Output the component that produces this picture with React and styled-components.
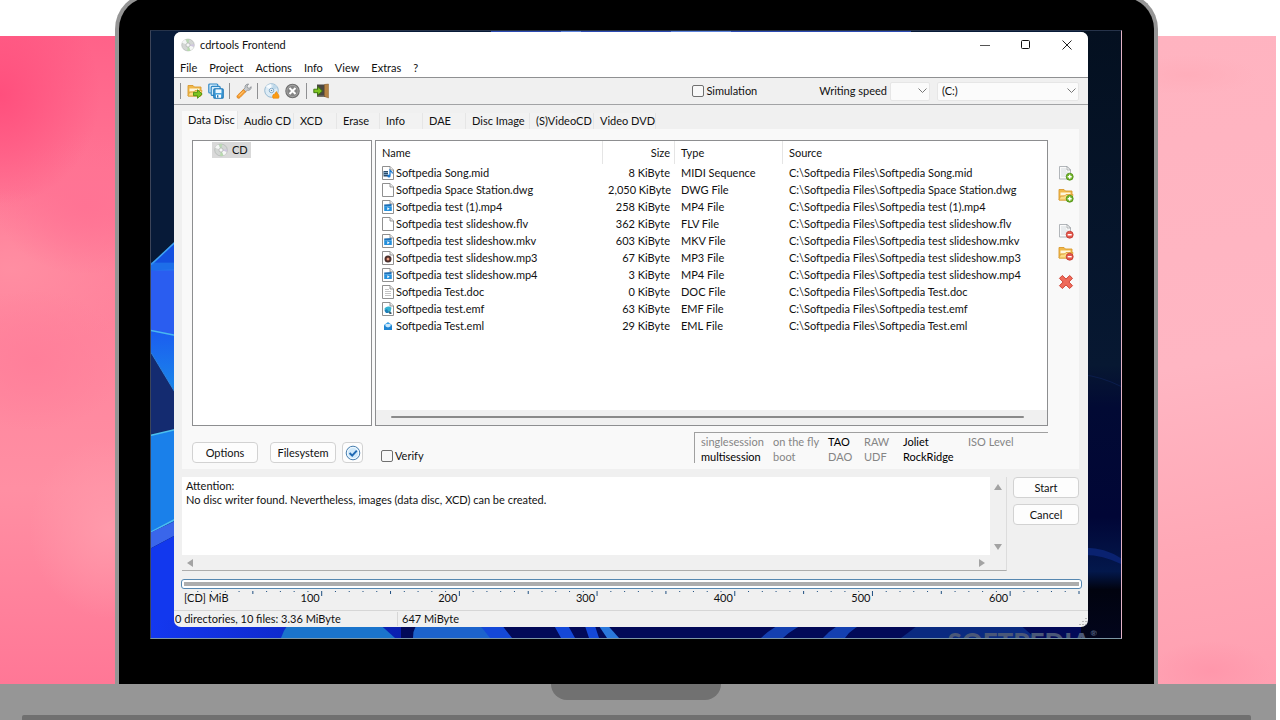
import { useState } from "react";
import styled, { createGlobalStyle, css } from "styled-components";

const MENU = ['File', 'Project', 'Actions', 'Info', 'View', 'Extras', '?'];

const TABS = [
  { label: 'Data Disc', width: 56 },
  { label: 'Audio CD', width: 56 },
  { label: 'XCD', width: 43 },
  { label: 'Erase', width: 43 },
  { label: 'Info', width: 43 },
  { label: 'DAE', width: 43 },
  { label: 'Disc Image', width: 64 },
  { label: '(S)VideoCD', width: 64 },
  { label: 'Video DVD', width: 62 },
];

const FILES = [
  { name: 'Softpedia Song.mid', size: '8 KiByte', type: 'MIDI Sequence', icon: 'midi' },
  { name: 'Softpedia Space Station.dwg', size: '2,050 KiByte', type: 'DWG File', icon: 'blank' },
  { name: 'Softpedia test (1).mp4', size: '258 KiByte', type: 'MP4 File', icon: 'video' },
  { name: 'Softpedia test slideshow.flv', size: '362 KiByte', type: 'FLV File', icon: 'blank' },
  { name: 'Softpedia test slideshow.mkv', size: '603 KiByte', type: 'MKV File', icon: 'video' },
  { name: 'Softpedia test slideshow.mp3', size: '67 KiByte', type: 'MP3 File', icon: 'audio' },
  { name: 'Softpedia test slideshow.mp4', size: '3 KiByte', type: 'MP4 File', icon: 'video' },
  { name: 'Softpedia Test.doc', size: '0 KiByte', type: 'DOC File', icon: 'doc' },
  { name: 'Softpedia test.emf', size: '63 KiByte', type: 'EMF File', icon: 'image' },
  { name: 'Softpedia Test.eml', size: '29 KiByte', type: 'EML File', icon: 'mail' },
];

const FLAGS = [
  [['singlesession', false], ['multisession', true]],
  [['on the fly', false], ['boot', false]],
  [['TAO', true], ['DAO', false]],
  [['RAW', false], ['UDF', false]],
  [['Joliet', true], ['RockRidge', true]],
  [['ISO Level', false]],
];

const LOG = 'Attention:\nNo disc writer found. Nevertheless, images (data disc, XCD) can be created.';
const CAPACITY = 650;

function DiscIcon() {
  return (
    <svg width="14" height="14" viewBox="0 0 16 16">
      <ellipse cx="8" cy="8" rx="7.2" ry="6.8" fill="#d3d6d4" stroke="#a6aaa8" strokeWidth=".6" />
      <path d="M8 8 1.2 5.5A7 7 0 0 1 5 1.8Z" fill="#f4f6f5" />
      <path d="M8 8 14.6 10A7 7 0 0 1 11 14.2Z" fill="#f7f8f7" />
      <path d="M8 8 5.5 1.6A7 7 0 0 1 9.5 1.2Z" fill="#b9d8b4" />
      <path d="M8 8 10.8 14.3A7 7 0 0 1 7 14.8Z" fill="#b7d9ae" />
      <path d="M8 8 15 7A7 7 0 0 1 14.6 10Z" fill="#cfc6df" />
      <circle cx="8" cy="8" r="2.4" fill="#eef0ef" stroke="#a9adab" strokeWidth=".7" />
      <circle cx="8" cy="8" r=".9" fill="#fff" />
    </svg>
  )
}

function FolderShape() {
  return (
    <>
      <path d="M1 13V2.5h5L7.5 4H14v9Z" fill="#f0b84a" stroke="#d9982e" strokeWidth=".9" />
      <path d="M2.5 5.5h10v3h-10Z" fill="#fff6dc" />
      <path d="M1 13 2.6 9.2l4-.2L8 7.5h7L13.8 13Z" fill="#fbdc85" stroke="#dea33a" strokeWidth=".9" />
    </>
  )
}

function OpenIcon() {
  return (
    <svg width="16" height="16" viewBox="0 0 16 16">
      <FolderShape />
      <path d="M6.5 9.3h4V6.8L15.2 11l-4.7 4.3v-2.6h-4Z" fill="#7cc41f" stroke="#4b8f10" strokeWidth=".9" />
    </svg>
  )
}

function SaveAllIcon() {
  return (
    <svg width="16" height="16" viewBox="0 0 16 16">
      <rect x=".8" y="1" width="9" height="9" rx="1" fill="#d5ecfa" stroke="#2f88c6" strokeWidth="1.2" />
      <rect x="3.2" y="3.4" width="9" height="9" rx="1" fill="#d5ecfa" stroke="#2f88c6" strokeWidth="1.2" />
      <rect x="5.8" y="5.8" width="9.4" height="9.4" rx="1" fill="#4aa3dc" stroke="#1f77b6" strokeWidth="1.2" />
      <rect x="7.6" y="6.4" width="5.8" height="3.6" fill="#eef8ff" />
      <rect x="8" y="11.6" width="5" height="3.2" fill="#fff" />
      <rect x="9" y="12.2" width="1.4" height="2.4" fill="#1f77b6" />
    </svg>
  )
}

function WrenchIcon() {
  return (
    <svg width="16" height="16" viewBox="0 0 16 16">
      <path d="M9 9.2 7 7.2l2-2.4c-.3-2 1-3.8 3.6-3.8l-1.6 2 .4 1.8 1.8.5 2-1.6c.2 2.4-1.6 4-3.8 3.6Z" fill="#c9cccf" stroke="#858a8f" strokeWidth=".8" />
      <path d="M7.4 6.6 9.6 8.8 4 14.6c-.8.8-2 .8-2.6.1s-.6-1.7.2-2.5Z" fill="#f7a034" stroke="#d97c17" strokeWidth=".8" />
      <path d="M3 12.8 7.4 8.3" stroke="#ffd08a" strokeWidth=".9" />
    </svg>
  )
}

function BurnIcon() {
  return (
    <svg width="16" height="16" viewBox="0 0 16 16">
      <circle cx="7.5" cy="7.5" r="6.8" fill="#dcebf5" stroke="#8fb4cf" strokeWidth=".9" />
      <path d="M7.5 7.5 2 3.5A6.5 6.5 0 0 1 7 1Z" fill="#f6fbff" />
      <path d="M7.5 7.5 9 1.2A6.5 6.5 0 0 1 13.5 5Z" fill="#bfd9ea" />
      <circle cx="7.5" cy="7.5" r="2.2" fill="#fff" stroke="#6f9dbf" strokeWidth=".9" />
      <circle cx="7.5" cy="7.5" r=".8" fill="#4f86ad" />
      <path d="M9 15.3c-.8-1.8-.4-3.2.8-4.2l.7.8c.2-1.6 1-2.6 2-3.4.2 1.4 2.6 2.8 2.6 4.9 0 .8-.2 1.4-.6 1.9Z" fill="#fb9b12" stroke="#e57d00" strokeWidth=".5" />
    </svg>
  )
}

function StopIcon() {
  return (
    <svg width="16" height="16" viewBox="0 0 16 16">
      <circle cx="7.5" cy="8" r="6.7" fill="#a4a4a4" stroke="#707070" strokeWidth="1.1" />
      <circle cx="7.5" cy="8" r="5.2" fill="#858585" />
      <path d="m5.2 5.7 4.6 4.6m0-4.6-4.6 4.6" stroke="#fff" strokeWidth="2" strokeLinecap="square" />
    </svg>
  )
}

function ExitIcon() {
  return (
    <svg width="16" height="16" viewBox="0 0 16 16">
      <path d="M4 1.5h11V14H4Z" fill="#4a4742" />
      <path d="M11.5 1.5 15.5 1v14l-4-1.5Z" fill="#b58344" stroke="#8d6330" strokeWidth=".5" />
      <path d="M4 12.5h7V14H4Z" fill="#77736c" />
      <path d="M.8 6.2h4V3.6L9.4 8l-4.6 4.3V9.7h-4Z" fill="#7cc41f" stroke="#39700d" strokeWidth=".9" />
    </svg>
  )
}

function BadgeIcon({ folder, remove }) {
  return (
    <svg width="16" height="16" viewBox="0 0 16 16">
      {folder ? <FolderShape /> : (
        <>
          <path d="M1.5 1.5H9L12.5 5v9h-11Z" fill="#fafafa" stroke="#a9aeb2" strokeWidth=".9" />
          <path d="M3 3h5v3.5h3V12H3Z" fill="#e8ebed" />
          <path d="M9 1.5V5h3.5Z" fill="#fff" stroke="#8d9296" strokeWidth=".7" />
        </>
      )}
      <circle cx="11.7" cy="11.7" r="3.5" fill={remove ? '#e4574c' : '#74b62b'} stroke={remove ? '#c03a30' : '#4c8d14'} strokeWidth=".8" />
      <path d={remove ? 'M9.7 11.7h4' : 'M9.7 11.7h4m-2-2v4'} stroke="#fff" strokeWidth="1.4" />
    </svg>
  )
}

function DeleteIcon() {
  return (
    <svg width="16" height="16" viewBox="0 0 16 16">
      <path d="M4.300 1.500 8 5.100l3.700-3.600 2.800 2.800L10.900 8l3.600 3.700-2.800 2.800L8 10.900l-3.700 3.600-2.800-2.800L5.100 8 1.500 4.300Z" fill="#ee6a5a" stroke="#cf4234" strokeWidth="1" strokeLinejoin="round" />
    </svg>
  )
}

function CheckIcon() {
  return (
    <svg width="16" height="16" viewBox="0 0 16 16">
      <circle cx="8" cy="8" r="6.8" fill="#cfe8fa" stroke="#4a7fae" strokeWidth="1" />
      <circle cx="8" cy="8" r="5.6" fill="none" stroke="#f4fbff" strokeWidth=".9" />
      <path d="m4.600 8 2.600 2.600 4.600-5" fill="none" stroke="#1f69b3" strokeWidth="2" />
    </svg>
  )
}

function FileIcon({ kind }) {
  if (kind === 'mail') {
    return (
      <svg width="12" height="14" viewBox="0 0 12 14">
        <path d="M2 6 6 3l4 3v5H2Z" fill="#3ba0e6" />
        <path d="M3.5 5h5v3.5h-5Z" fill="#c9e7fb" />
        <path d="m2 6.5 4 2.3 4-2.3V11H2Z" fill="#1e84d2" />
      </svg>
    )
  }
  return (
    <svg width="12" height="14" viewBox="0 0 12 14">
      <path d="M.5.5H8L11.500 4v9.500H.5Z" fill="#fff" stroke="#909090" />
      <path d="M8 .5V4h3.500" fill="#ececec" stroke="#808080" strokeWidth=".8" />
      {kind === 'midi' && (
        <>
          <path d="M1.500 5H6v5.500H1.500Z" fill="#2b4a68" />
          <path d="M1.500 6.500H6M1.500 8.500H6" stroke="#9cc4e4" strokeWidth=".7" />
          <path d="M8 9.500V4.500c.8 1 2.400 1 2.400 3" fill="none" stroke="#1677d2" strokeWidth="1.300" />
          <circle cx="7" cy="10" r="1.6" fill="#1677d2" />
        </>
      )}
      {kind === 'video' && (
        <>
          <path d="M2.200 4.500 9.600 4v2l-7.400.5Z" fill="#1f6fb5" />
          <path d="M2.200 6.300h7.600V11H2.200Z" fill="#2590dc" />
          <path d="m5.300 7.200 2.400 1.500-2.400 1.500Z" fill="#fff" />
        </>
      )}
      {kind === 'audio' && (
        <>
          <circle cx="6" cy="8" r="3.5" fill="#4b2f2c" />
          <circle cx="6" cy="8" r="1.5" fill="#e2805f" />
          <circle cx="6" cy="8" r=".6" fill="#fff" />
        </>
      )}
      {kind === 'doc' && <path d="M3 4.500h4M3 6.500h6M3 8.500h6M3 10.500h6" stroke="#b5b5b5" strokeWidth=".8" />}
      {kind === 'image' && (
        <>
          <path d="M2.300 7c1-2.500 5-3.500 7.200-1.200l-1 4.200H4.300Z" fill="#35b3d3" />
          <path d="M2.300 8.500 5 7l2 4H4Z" fill="#1f7fb8" />
          <path d="m6.500 9 3 1.500V12h-2Z" fill="#3d5a6b" />
        </>
      )}
    </svg>
  )
}

// abstract ribbons that show around the window
function Wallpaper() {
  return (
    <WallpaperArt viewBox="0 0 970 608" preserveAspectRatio="none" aria-hidden="true">
      <defs>
        <linearGradient id="wp-blue" x1="0" y1="0" x2="1" y2="0">
          <stop offset="0" stopColor="#1438f0" />
          <stop offset="1" stopColor="#0a1fb0" />
        </linearGradient>
        <linearGradient id="wp-cyan" x1="0" y1="0" x2="0" y2="1">
          <stop offset="0" stopColor="#1b5cf0" />
          <stop offset="1" stopColor="#1a8fe8" />
        </linearGradient>
        <linearGradient id="wp-right" x1="0" y1="0" x2="0" y2="1">
          <stop offset="0" stopColor="#041020" />
          <stop offset=".55" stopColor="#071832" />
          <stop offset=".62" stopColor="#020a34" />
          <stop offset=".8" stopColor="#010636" />
          <stop offset=".89" stopColor="#03184c" />
          <stop offset=".92" stopColor="#01030f" />
          <stop offset="1" stopColor="#02051c" />
        </linearGradient>
      </defs>
      <path d="M0 0h970v608H0Z" fill="#071a38" />
      <path d="M340 0h420v3H340Z" fill="#2c4bb4" />
      <path d="M410 0h20v3h-20ZM520 0h60v3h-60Z" fill="#5b82dc" />
      <path d="M930 0h40v608h-40Z" fill="url(#wp-right)" />
      <path d="M930 344q20 2 40 12" fill="none" stroke="#0b1d4c" />
      <path d="M930 518q20-2 40 10v6q-20-10-40-9Z" fill="#0a2270" />
      <path d="M0 234 30 206v100L0 300Z" fill="#2a5df0" />
      <path d="M0 234 30 206v32L0 240Z" fill="#1450e0" />
      <path d="M0 234 30 206" stroke="#3fa4f4" strokeWidth="1.5" />
      <path d="M0 232h30v8H0Z" fill="#2382ee" opacity=".6" />
      <path d="M0 300 30 306v66L0 322Z" fill="url(#wp-cyan)" />
      <path d="M0 300 30 306" stroke="#49b8f0" strokeWidth="1.5" />
      <path d="M0 322 30 372v26L0 405Z" fill="#142b70" />
      <path d="M0 322 30 372" stroke="#2f86e0" />
      <path d="M0 405 30 398v90L0 502Z" fill="#1a80ea" />
      <path d="M0 405 30 398M0 502 30 486" stroke="#4cc0ee" strokeWidth="1.5" />
      <path d="M0 502 30 488v14L0 518Z" fill="#3a66ea" />
      <path d="M0 518 30 502v106H0Z" fill="#1238ee" />
      <path d="M20 590h910v18H20Z" fill="#020a58" />
      <path d="M0 590h250v18H0Z" fill="url(#wp-blue)" />
      <path d="M130 608q5-15 14-18h80l20 18Z" fill="#1a74cc" />
      <path d="M262 608q0-14 10-18h50l22 18Z" fill="#1c63cc" />
      <path d="M325 590h22l14 18h-22ZM400 590h14l10 18h-14ZM432 590h10l6 18h-10Z" fill="#1448d8" />
      <path d="m452 590 16 18h-12l-12-18Z" fill="#2a78dc" />
      <path d="M610 608q12-12 30-18h22q-20 8-30 18ZM672 608q10-12 28-18h20q-20 8-26 18Z" fill="#1440b0" />
      <path d="m750 608 24-18h90l20 18Z" fill="#0a2a80" />
    </WallpaperArt>
  )
}

function Ruler() {
  const ticks = [];
  for (let v = 10; v <= CAPACITY; v += 10) ticks.push(v);
  return (
    <RulerBox>
      <Ticks aria-hidden="true">
        {ticks.map((v) => {
          const x = `${(v / CAPACITY) * 100}%`;
          const length = v % 100 === 0 ? 5 : v % 50 === 0 ? 3 : 1;
          return <line key={v} x1={x} x2={x} y1="0" y2={length} stroke="#1f4f80" strokeWidth="1" />
        })}
      </Ticks>
      <RulerLabels>
        {[100, 200, 300, 400, 500, 600].map((v) => (
          <RulerCell key={v}>
            <span>{v === 100 && '[CD] MiB'}</span>
            <span>{v}</span>
          </RulerCell>
        ))}
      </RulerLabels>
    </RulerBox>
  )
}

function App() {
  const [tab, setTab] = useState('Data Disc');

  return (
    <Page>
      <GlobalStyle />
      <Scene>
        <Backdrop />
        <Lid>
          <Screen>
            <Wallpaper />
            <Watermark>SOFTPEDIA<sup>®</sup></Watermark>
            <Window>
              <TitleBar>
                <DiscIcon />
                <Title>cdrtools Frontend</Title>
                <Caption aria-label="Minimize">
                  <svg width="10" height="10"><path d="M0 5.500h10" stroke="#555" /></svg>
                </Caption>
                <Caption aria-label="Maximize">
                  <svg width="10" height="10"><rect x=".5" y=".5" width="8" height="8" rx="1" fill="none" stroke="#111" /></svg>
                </Caption>
                <Caption aria-label="Close">
                  <svg width="10" height="10"><path d="m.5.5 9 9m0-9-9 9" stroke="#222" /></svg>
                </Caption>
              </TitleBar>
              <MenuBar>
                {MENU.map((item) => <MenuItem key={item}>{item}</MenuItem>)}
              </MenuBar>
              <Toolbar>
                <Divider />
                <ToolButton aria-label="Open project"><OpenIcon /></ToolButton>
                <ToolButton aria-label="Save project"><SaveAllIcon /></ToolButton>
                <Divider />
                <ToolButton aria-label="Settings"><WrenchIcon /></ToolButton>
                <Divider />
                <ToolButton aria-label="Burn"><BurnIcon /></ToolButton>
                <ToolButton aria-label="Abort"><StopIcon /></ToolButton>
                <Divider />
                <ToolButton aria-label="Exit"><ExitIcon /></ToolButton>
                <ToolbarRight>
                  <CheckLabel>
                    <CheckBox type="checkbox" />
                    Simulation
                  </CheckLabel>
                  <SpeedLabel htmlFor="speed">Writing speed</SpeedLabel>
                  <Select id="speed" $width={40}><option></option></Select>
                  <Select aria-label="Drive" $width={142}><option>(C:)</option></Select>
                </ToolbarRight>
              </Toolbar>

              <Body>
                <TabStrip>
                  {TABS.map(({ label, width }) => (
                    <Tab key={label} $width={width} $active={tab === label} onClick={() => setTab(label)}>{label}</Tab>
                  ))}
                </TabStrip>
                <Panel>
                  <WorkArea>
                    <Tree>
                      <TreeNode><DiscIcon />CD</TreeNode>
                    </Tree>
                    <List>
                      <Table>
                        <colgroup>
                          <Col $width={227} />
                          <Col $width={72} />
                          <Col $width={108} />
                          <col />
                        </colgroup>
                        <thead>
                          <tr>
                            <Th>Name</Th>
                            <Th $right>Size</Th>
                            <Th>Type</Th>
                            <Th $last>Source</Th>
                          </tr>
                        </thead>
                        <tbody>
                          {FILES.map((file) => (
                            <tr key={file.name}>
                              <Td><NameCell><FileIcon kind={file.icon} />{file.name}</NameCell></Td>
                              <Td $right>{file.size}</Td>
                              <Td>{file.type}</Td>
                              <Td>{`C:\\Softpedia Files\\${file.name}`}</Td>
                            </tr>
                          ))}
                        </tbody>
                      </Table>
                      <ListScroll><Thumb /></ListScroll>
                    </List>
                    <SideTools>
                      <ToolButton aria-label="Add file"><BadgeIcon /></ToolButton>
                      <ToolButton aria-label="Add folder"><BadgeIcon folder /></ToolButton>
                      <SideGap />
                      <ToolButton aria-label="Remove file"><BadgeIcon remove /></ToolButton>
                      <ToolButton aria-label="Remove folder"><BadgeIcon folder remove /></ToolButton>
                      <SideGap $small />
                      <ToolButton aria-label="Delete all"><DeleteIcon /></ToolButton>
                    </SideTools>
                  </WorkArea>
                  <OptionsRow>
                    <Button>Options</Button>
                    <Button>Filesystem</Button>
                    <Button $icon aria-label="Apply"><CheckIcon /></Button>
                    <CheckLabel $low>
                      <CheckBox type="checkbox" />
                      Verify
                    </CheckLabel>
                    <Flags>
                      {FLAGS.map((column) => (
                        <div key={column[0][0]}>
                          {column.map(([text, on]) => <Flag key={text} $on={on}>{text}</Flag>)}
                        </div>
                      ))}
                    </Flags>
                  </OptionsRow>
                </Panel>

                <LogRow>
                  <LogBox>
                    <LogText aria-label="Messages" readOnly value={LOG} />
                    <VScroll>
                      <svg width="8" height="6"><path d="M4 0 8 6H0Z" fill="#a3a3a3" /></svg>
                      <svg width="8" height="6"><path d="M0 0h8L4 6Z" fill="#a3a3a3" /></svg>
                    </VScroll>
                    <HScroll>
                      <svg width="6" height="8"><path d="M6 0v8L0 4Z" fill="#a3a3a3" /></svg>
                      <svg width="6" height="8"><path d="M0 0v8l6-4Z" fill="#a3a3a3" /></svg>
                    </HScroll>
                  </LogBox>
                  <Actions>
                    <Button>Start</Button>
                    <Button>Cancel</Button>
                  </Actions>
                </LogRow>

                <Capacity><CapacityBar /></Capacity>
                <Ruler />
              </Body>

              <StatusBar>
                <StatusCell $width={224}>0 directories, 10 files: 3.36 MiByte</StatusCell>
                <StatusCell>647 MiByte</StatusCell>
                <Grip width="9" height="9" viewBox="0 0 9 9">
                  <path d="M7 1h2v1H7ZM4 4h2v1H4ZM7 4h2v1H7ZM1 7h2v1H1ZM4 7h2v1H4ZM7 7h2v1H7Z" fill="#b8b8b8" />
                </Grip>
              </StatusBar>
            </Window>
          </Screen>
        </Lid>
        <Backdrop $light />
      </Scene>
      <Base>
        <Notch />
        <Foot />
      </Base>
    </Page>
  )
}

export default App

const GlobalStyle = createGlobalStyle`
  * {
    box-sizing: border-box;
  }

  body {
    margin: 0;
    background: #fff;
    color: #111;
    font-family: Lato, "Open Sans", sans-serif;
    font-size: 11px;
    line-height: 14px;
  }

  button, input, select, textarea {
    margin: 0;
    color: inherit;
    font: inherit;
  }

  svg {
    display: block;
    flex: none;
  }
`;

const Page = styled.div`
  display: flex;
  flex-direction: column;
  min-height: 100vh;
  padding-right: 4px;
  overflow: hidden;
`;

const Scene = styled.div`
  flex: 1;
  display: grid;
  grid-template-columns: 115px minmax(0, 1fr) 118px;
`;

const Backdrop = styled.div`
  margin-top: 36px;
  background:
    radial-gradient(100px 110px at 0% 9%, #ff4f7d, transparent),
    radial-gradient(90px 70px at 75% 26%, #ff7394, transparent),
    radial-gradient(90px 70px at 30% 50%, #ff7f9a, transparent),
    radial-gradient(80px 90px at 95% 76%, #ff9aab, transparent),
    radial-gradient(140px 80px at 10% 36%, #ff8ea2, transparent),
    linear-gradient(#ff6289, #ff7f9a 35%, #ff8fa3 70%, #ff7796);

  ${({ $light }) => $light && css`
    background:
      radial-gradient(60px 30px at 45% 98%, #ff97ab, transparent),
      radial-gradient(70px 20px at 25% 6%, #ffaebb, transparent),
      linear-gradient(170deg, #ffb3c0, #ffb6c3 50%, #ffa8b6 78%, #ff9fb1);
  `}
`;

const Lid = styled.div`
  display: flex;
  margin-top: -7px;
  padding: 33px 32px 45px 31px;
  border: 4px solid #959595;
  border-bottom: 0;
  border-radius: 36px 36px 0 0;
  background: #000;
`;

const Screen = styled.div`
  position: relative;
  flex: 1;
  min-width: 0;
  display: flex;
  padding: 1px 33px 11px 23px;
  border: 1px solid;
  border-color: #26334a #e3b3c6 #7d97a5 #3c4458;
`;

const WallpaperArt = styled.svg`
  position: absolute;
  inset: 0;
  width: 100%;
  height: 100%;
`;

const Watermark = styled.div`
  position: absolute;
  right: 24px;
  bottom: 0;
  height: 9px;
  overflow: hidden;
  color: #4a5878;
  font-size: 26px;
  font-weight: 900;
  line-height: 26px;

  sup {
    font-size: 8px;
    line-height: 8px;
    vertical-align: top;
  }
`;

const Window = styled.main`
  position: relative;
  flex: 1;
  min-width: 0;
  display: flex;
  flex-direction: column;
  overflow: hidden;
  border-radius: 7px;
  background: #f0f0f0;
`;

const TitleBar = styled.header`
  display: flex;
  align-items: center;
  height: 26px;
  padding: 0 1px 0 7px;
  background: #fff;
`;

const Title = styled.h1`
  flex: 1;
  margin: 0 0 0 5px;
  font-size: 11px;
  font-weight: 400;
`;

const Caption = styled.button`
  width: 41px;
  height: 26px;
  padding: 0;
  display: grid;
  place-items: center;
  border: 0;
  background: none;
`;

const MenuBar = styled.nav`
  display: flex;
  gap: 12px;
  height: 20px;
  padding-left: 6px;
  border-bottom: 1px solid #8f9092;
  background: #fff;
`;

const MenuItem = styled.button`
  padding: 0;
  border: 0;
  background: none;
`;

const Toolbar = styled.div`
  display: flex;
  align-items: center;
  gap: 5px;
  height: 27px;
  padding: 0 9px 0 6px;
  border-bottom: 1px solid #a2a3a5;
`;

const Divider = styled.span`
  width: 1px;
  height: 16px;
  margin-right: 1px;
  background: #8f9092;
`;

const ToolButton = styled.button`
  width: 16px;
  height: 16px;
  padding: 0;
  border: 0;
  background: none;
`;

const ToolbarRight = styled.div`
  margin-left: auto;
  display: flex;
  align-items: center;
`;

const CheckLabel = styled.label`
  display: flex;
  align-items: center;
  gap: 2px;

  ${({ $low }) => $low && css`
    align-self: end;
    margin-left: 18px;
  `}
`;

const CheckBox = styled.input`
  appearance: none;
  width: 12px;
  height: 12px;
  border: 1px solid #707070;
  border-radius: 2px;
  background: #f8f8f8;
`;

const SpeedLabel = styled.label`
  margin: 0 3px 0 62px;
`;

const Select = styled.select`
  appearance: none;
  width: ${({ $width }) => $width}px;
  height: 19px;
  padding: 0 4px;
  border: 1px solid #e6e6e6;
  border-radius: 2px;
  background: #fbfbfb url("data:image/svg+xml,%3Csvg xmlns='http://www.w3.org/2000/svg' width='9' height='6'%3E%3Cpath d='m.5.5 4 4 4-4' fill='none' stroke='%23777'/%3E%3C/svg%3E") no-repeat right 2px center;

  & + & {
    margin-left: 7px;
  }
`;

const Body = styled.div`
  flex: 1;
  display: flex;
  flex-direction: column;
  padding: 6px 9px 0 8px;
`;

const TabStrip = styled.div`
  display: flex;
  align-items: flex-end;
  height: 18px;
`;

const Tab = styled.button`
  width: ${({ $width }) => $width}px;
  height: ${({ $active }) => $active ? 18 : 16}px;
  padding: 0 0 0 6px;
  border: 0;
  border-right: 1px solid #e6e6e6;
  background: ${({ $active }) => $active ? '#f9f9f9' : '#f2f2f2'};
  text-align: left;
  white-space: nowrap;
`;

const Panel = styled.section`
  flex: 1;
  display: flex;
  flex-direction: column;
  padding: 11px 0 6px 10px;
  background: #f9f9f9;
`;

const WorkArea = styled.div`
  flex: 1;
  display: flex;
`;

const Tree = styled.div`
  width: 180px;
  margin-right: 3px;
  padding: 1px 0 0 19px;
  border: 1px solid #8d8e90;
  background: #fff;
`;

const TreeNode = styled.button`
  display: flex;
  align-items: center;
  gap: 4px;
  height: 16px;
  padding: 0 3px 0 2px;
  border: 0;
  background: #d9d9d9;
`;

const List = styled.div`
  flex: 1;
  min-width: 0;
  display: flex;
  flex-direction: column;
  border: 1px solid #8d8e90;
  background: #fff;
`;

const Table = styled.table`
  width: 100%;
  table-layout: fixed;
  border-collapse: separate;
  border-spacing: 0;
  white-space: nowrap;
`;

const Col = styled.col`
  width: ${({ $width }) => $width}px;
`;

const Th = styled.th`
  height: 23px;
  padding: 0 ${({ $right }) => $right ? 4 : 6}px;
  border-right: ${({ $last }) => $last ? 0 : 1}px solid #e5e5e5;
  font-weight: 400;
  text-align: ${({ $right }) => $right ? 'right' : 'left'};
`;

const Td = styled.td`
  height: 17px;
  padding: 0 ${({ $right }) => $right ? 5 : 6}px;
  text-align: ${({ $right }) => $right ? 'right' : 'left'};
`;

const NameCell = styled.div`
  display: flex;
  align-items: center;
  gap: 2px;
`;

const ListScroll = styled.div`
  margin-top: auto;
  height: 15px;
  padding: 6px 23px 0 15px;
  background: #f0f0f0;
`;

const Thumb = styled.div`
  height: 2px;
  border-radius: 1px;
  background: #8a8a8a;
`;

const SideTools = styled.div`
  width: 31px;
  display: flex;
  flex-direction: column;
  align-items: center;
  gap: 6px;
  padding: 25px 0 0 5px;
`;

const SideGap = styled.div`
  height: ${({ $small }) => $small ? 1 : 8}px;
`;

const OptionsRow = styled.div`
  display: flex;
  align-items: center;
  height: 31px;
  margin: 6px 31px 0 0;
`;

const Button = styled.button`
  width: ${({ $icon }) => $icon ? 21 : 66}px;
  height: 21px;
  padding: 0;
  display: grid;
  place-items: center;
  border: 1px solid #d2d2d2;
  border-radius: 4px;
  background: #fdfdfd;

  ${OptionsRow} & {
    align-self: end;
    margin-right: ${({ $icon }) => $icon ? 0 : 12}px;
  }

  ${OptionsRow} & + & {
    margin-right: ${({ $icon }) => $icon ? 0 : 6}px;
  }
`;

const Flags = styled.div`
  display: grid;
  grid-template-columns: 72px 55px 36px 39px 65px 1fr;
  width: 354px;
  height: 31px;
  margin-left: auto;
  padding: 1px 0 0 6px;
  border-top: 1px solid #a0a0a0;
  border-left: 1px solid #a0a0a0;
  line-height: 15px;
  white-space: nowrap;
`;

const Flag = styled.div`
  color: ${({ $on }) => $on ? '#000' : '#858585'};
`;

const LogRow = styled.div`
  display: flex;
  gap: 6px;
  margin: 8px 0;
`;

const LogBox = styled.div`
  flex: 1;
  display: grid;
  grid-template-columns: 1fr 16px;
  grid-template-rows: 78px 15px;
  border-right: 1px solid #dcdcdc;
  border-bottom: 1px solid #acacac;
`;

const LogText = styled.textarea`
  padding: 2px 4px;
  border: 0;
  background: #fff;
  resize: none;
  outline: 0;
`;

const VScroll = styled.div`
  display: flex;
  flex-direction: column;
  align-items: center;
  justify-content: space-between;
  padding: 7px 0 5px;
`;

const HScroll = styled.div`
  display: flex;
  align-items: center;
  justify-content: space-between;
  padding: 0 5px;
`;

const Actions = styled.div`
  display: flex;
  flex-direction: column;
  gap: 6px;
`;

const Capacity = styled.div`
  height: 10px;
  padding: 2px;
  margin: 0 -3px 0 -1px;
  border: 1px solid #5687b0;
  border-radius: 3px;
  background: #fff;
`;

const CapacityBar = styled.div`
  height: 4px;
  background: #adadad;
`;

const RulerBox = styled.div`
  height: 21px;
  padding: 2px 0 0 2px;
`;

const Ticks = styled.svg`
  width: 100%;
  height: 5px;
  overflow: visible;
`;

const RulerLabels = styled.div`
  display: grid;
  grid-template-columns: repeat(6, 2fr) 1fr;
  margin-top: -5px;
`;

const RulerCell = styled.div`
  display: flex;
  justify-content: space-between;
  padding-right: 2px;
`;

const StatusBar = styled.footer`
  display: flex;
  align-items: center;
  height: 17px;
  border-top: 1px solid #d6d6d6;
`;

const StatusCell = styled.div`
  width: ${({ $width }) => $width ? `${$width}px` : 'auto'};
  padding-left: ${({ $width }) => $width ? 1 : 4}px;
  border-right: ${({ $width }) => $width ? '1px solid #d6d6d6' : 0};
`;

const Grip = styled.svg`
  align-self: end;
  margin: 0 1px 1px auto;
`;

const Base = styled.div`
  display: flex;
  flex-direction: column;
  align-items: center;
  justify-content: space-between;
  height: 36px;
  background: #969696;
`;

const Notch = styled.div`
  width: 170px;
  height: 16px;
  margin-right: 4px;
  border-radius: 0 0 16px 16px;
  background: #717171;
`;

const Foot = styled.div`
  align-self: stretch;
  height: 5px;
  margin: 0 25px 0 22px;
  border-radius: 2px 2px 0 0;
  background: #707070;
`;
